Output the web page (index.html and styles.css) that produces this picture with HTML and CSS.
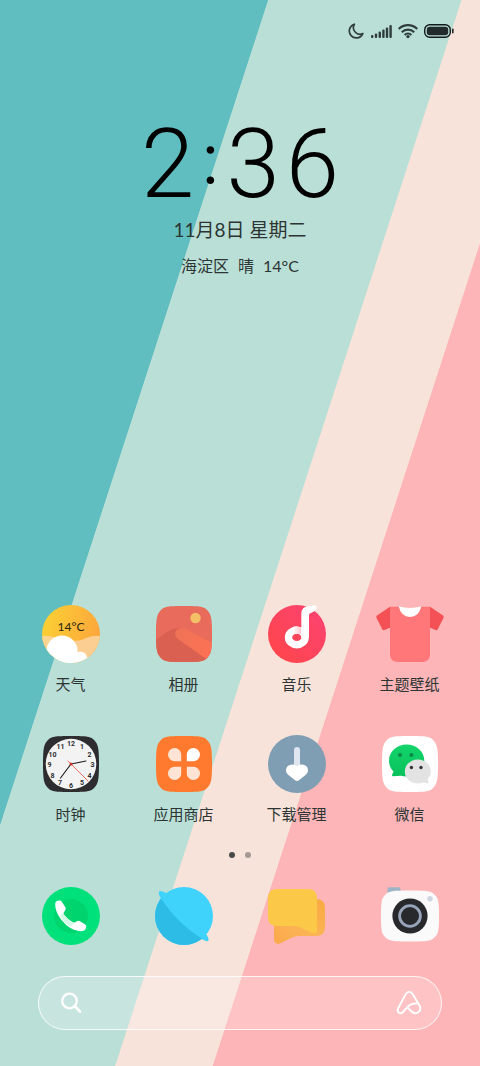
FILE: index.html
```
<!DOCTYPE html>
<html lang="zh-CN">
<head>
    <meta charset="UTF-8">
    <meta name="viewport" content="width=device-width, initial-scale=1.0">
    <title>桌面</title>
    <link rel="stylesheet" href="styles.css">
</head>
<body>
    <header class="status-bar">
        <svg width="16" height="16" viewBox="0 0 16 16" fill="none" stroke="#2f3d3b" stroke-width="1.7" stroke-linejoin="round">
            <path d="M6.4 1.2A7 7 0 1 0 14.8 10.6A6.6 6.6 0 0 1 6.4 1.2Z"/>
        </svg>
        <svg width="22" height="16" viewBox="0 0 22 16" fill="#2f3d3b">
            <rect x="1" y="12" width="2.4" height="3" rx="1"/>
            <rect x="4.8" y="10.5" width="2.4" height="4.5" rx="1"/>
            <rect x="8.6" y="8.5" width="2.4" height="6.5" rx="1"/>
            <rect x="12.2" y="6.5" width="2.4" height="8.5" rx="1"/>
            <rect x="15.8" y="4.5" width="2.4" height="10.5" rx="1"/>
            <rect x="19.4" y="2" width="2.4" height="13" rx="1"/>
        </svg>
        <svg width="20" height="16" viewBox="0 0 20 16" fill="none" stroke="#2f3d3b" stroke-width="2.2">
            <path d="M0.7 6A13 13 0 0 1 19.3 6"/>
            <path d="M3.8 9.2A8.7 8.7 0 0 1 16.2 9.2"/>
            <path d="M6.6 12A4.8 4.8 0 0 1 13.4 12" stroke-width="2"/>
            <circle cx="10" cy="13.6" r="1.7" fill="#2f3d3b" stroke="none"/>
        </svg>
        <svg width="30" height="16" viewBox="0 0 30 16">
            <rect x="0.7" y="1.7" width="25.6" height="12.6" rx="5" fill="none" stroke="#121a19" stroke-width="1.4"/>
            <rect x="2.8" y="3.8" width="21.4" height="8.4" rx="3" fill="#202b2a"/>
            <rect x="28" y="5.5" width="1.6" height="5" rx="0.8" fill="#202b2a"/>
        </svg>
    </header>

    <section class="clock">
        <h1 class="time"><span>2</span><span class="colon">:</span><span>3</span><span>6</span></h1>
        <p class="date">11月8日 星期二</p>
        <p class="weather"><span>海淀区</span><span>晴</span><span>14°C</span></p>
    </section>

    <main class="home">
        <div class="apps">
            <button type="button" class="app">
                <svg class="icon" viewBox="0 0 72 60">
                    <defs>
                        <linearGradient id="sky" x1="0" y1="0.3" x2="1" y2="0.5">
                            <stop offset="0" stop-color="#fbd034"/>
                            <stop offset="1" stop-color="#fca63c"/>
                        </linearGradient>
                        <clipPath id="round"><circle cx="36" cy="30" r="29"/></clipPath>
                    </defs>
                    <circle cx="36" cy="30" r="29" fill="url(#sky)"/>
                    <g clip-path="url(#round)">
                        <path d="M6 32Q14 31 21 34L18 50L6 50Z" fill="#fdd593"/>
                        <path d="M38 37Q46 37 51 34Q58 31 66 32V60H36Z" fill="#fdce91"/>
                        <circle cx="27" cy="47" r="15.5" fill="#fff"/>
                        <path d="M27 47L42 48Q50 46 52.5 54L60 60H20Z" fill="#fff"/>
                    </g>
                    <text class="icon-temp" x="36" y="27" text-anchor="middle">14°C</text>
                </svg>
                <span>天气</span>
            </button>

            <button type="button" class="app">
                <svg class="icon" viewBox="0 0 72 60">
                    <defs>
                        <linearGradient id="dune" x1="0" y1="0" x2="1" y2="1">
                            <stop offset="0" stop-color="#ee7355"/>
                            <stop offset="1" stop-color="#ff7155"/>
                        </linearGradient>
                        <clipPath id="photoClip"><path id="tile" d="M36 2C52 2 56 2.5 59.5 6.5S64 14 64 30S63 49.5 59.5 53.5S52 58 36 58S16 57.5 12.5 53.5S8 46 8 30S9 10.5 12.5 6.5S20 2 36 2Z"/></clipPath>
                    </defs>
                    <g clip-path="url(#photoClip)">
                        <rect x="8" y="2" width="56" height="56" fill="#e96b5b"/>
                        <path d="M8 36C18 29 24 22 34 25L64 58H8Z" fill="#da6151"/>
                        <path d="M39 25.5L64 39V58Q60 56 57 54L30 35C23 29 30 21 39 25.5Z" fill="url(#dune)"/>
                        <circle cx="47.5" cy="14" r="5.2" fill="#f4c065"/>
                    </g>
                </svg>
                <span>相册</span>
            </button>

            <button type="button" class="app">
                <svg class="icon" viewBox="0 0 72 60">
                    <defs>
                        <linearGradient id="disc" x1="1" y1="0" x2="0" y2="1">
                            <stop offset="0" stop-color="#fb4274"/>
                            <stop offset="1" stop-color="#ff4647"/>
                        </linearGradient>
                        <linearGradient id="noteShade" x1="0" y1="0" x2="1" y2="0">
                            <stop offset="0" stop-color="#fff"/>
                            <stop offset="1" stop-color="#ffc2cb"/>
                        </linearGradient>
                    </defs>
                    <circle cx="36" cy="30" r="29" fill="url(#disc)"/>
                    <ellipse cx="35.8" cy="33.4" rx="8.3" ry="7.3" fill="none" stroke="#fff" stroke-width="7.4"/>
                    <path d="M32 22.8Q37 21.5 40.4 24V30Q37 29 33 30Z" fill="url(#noteShade)"/>
                    <path d="M40.3 34V10Q40.3 2.6 48 2.3Q51 2 53 1.2Q55.5 1 55.6 4Q55.3 7 51 8.4Q48 9 48 11.5V34Z" fill="#fff"/>
                </svg>
                <span>音乐</span>
            </button>

            <button type="button" class="app">
                <svg class="icon" viewBox="0 0 72 60">
                    <path d="M16 2.7L3 11.5Q1.8 12.5 2.5 14L8.4 25.5Q9 26.5 10.5 26L17 23.3V3Z" fill="#f35155"/>
                    <path d="M56 2.7L69 11.5Q70.2 12.5 69.5 14L63.6 25.5Q63 26.5 61.5 26L55 23.3V3Z" fill="#f35155"/>
                    <path d="M16 3.5Q16 2.7 18 2.7H25Q27 10 36 10T47 2.7H54Q56 2.7 56 3.5V50Q56 58 48 58H24Q16 58 16 50Z" fill="#ff7779"/>
                    <path d="M24.8 2.6Q36 5.5 47.2 2.6Q45 13 36 13T24.8 2.6Z" fill="#fff"/>
                </svg>
                <span>主题壁纸</span>
            </button>

            <button type="button" class="app">
                <svg class="icon" viewBox="0 0 72 60">
                    <use href="#tile" fill="#2d2d2f"/>
                    <circle cx="36" cy="30" r="25.3" fill="#f3f3f3"/>
                    <g class="dial" text-anchor="middle">
                        <text x="36" y="11.5">12</text>
                        <text x="47" y="14.5">1</text>
                        <text x="54.5" y="22.5">2</text>
                        <text x="57.5" y="32.5">3</text>
                        <text x="54.5" y="43.5">4</text>
                        <text x="47" y="51">5</text>
                        <text x="36" y="54">6</text>
                        <text x="25" y="51">7</text>
                        <text x="17.5" y="43.5">8</text>
                        <text x="14.5" y="32.5">9</text>
                        <text x="17.5" y="22.5">10</text>
                        <text x="25.5" y="14.5">11</text>
                    </g>
                    <g stroke-linecap="round">
                        <path d="M36 30L51 27" stroke="#222" stroke-width="1.2"/>
                        <path d="M36 30L25.5 44" stroke="#222" stroke-width="1.2"/>
                        <path d="M33 27L53 47" stroke="#ee5a4f" stroke-width="0.9"/>
                    </g>
                    <circle cx="36" cy="30" r="1.5" fill="#c8322c"/>
                </svg>
                <span>时钟</span>
            </button>

            <button type="button" class="app">
                <svg class="icon" viewBox="0 0 72 60">
                    <use href="#tile" fill="#ff7a2e"/>
                    <path d="M33.2 27.2H26.6A6.6 6.6 0 1 1 33.2 20.6Z" fill="#ffe4d5"/>
                    <path d="M38.8 27.2V20.6A6.6 6.6 0 1 1 45.4 27.2Z" fill="#fff"/>
                    <path d="M33.2 32.8V39.4A6.6 6.6 0 1 1 26.6 32.8Z" fill="#ffe4d5"/>
                    <path d="M38.8 32.8H45.4A6.6 6.6 0 1 1 38.8 39.4Z" fill="#ffe4d5"/>
                </svg>
                <span>应用商店</span>
            </button>

            <button type="button" class="app">
                <svg class="icon" viewBox="0 0 72 60">
                    <circle cx="36" cy="30" r="29" fill="#7f9db3"/>
                    <rect x="33" y="13" width="6" height="24" rx="3" fill="#dfe6ef"/>
                    <path d="M36 32.5C39 29.5 44 30 46 33C47.8 36 47 39 44.5 41L38 46.3Q36 47.5 34 46.3L27.5 41C25 39 24.2 36 26 33C28 30 33 29.5 36 32.5Z" fill="#fff"/>
                </svg>
                <span>下载管理</span>
            </button>

            <button type="button" class="app">
                <svg class="icon" viewBox="0 0 72 60">
                    <defs>
                        <linearGradient id="chat" x1="0" y1="0" x2="0" y2="1">
                            <stop offset="0" stop-color="#14d46b"/>
                            <stop offset="1" stop-color="#08c25c"/>
                        </linearGradient>
                    </defs>
                    <use href="#tile" fill="#fff"/>
                    <path d="M32.7 10.5C42.5 10.5 50.3 17.8 50.3 26.5S42.5 42.6 32.7 42.6Q29.5 42.6 27 41.8L19 42.3Q17.6 42 18.2 40.5L19.5 37.6C16.5 34.5 15 30.7 15 26.5C15 17.8 22.8 10.5 32.7 10.5Z" fill="url(#chat)"/>
                    <circle cx="26" cy="21" r="2.1" fill="#0a8a48"/>
                    <circle cx="37.4" cy="21" r="2.1" fill="#0a8a48"/>
                    <path d="M43.8 25.5C51 25.5 56.8 30.8 56.8 37.5Q56.8 42 53.5 45L54.5 48.5Q54.5 49.7 53.3 49.3L49 48.5Q46.5 49.5 43.8 49.5C36.6 49.5 30.8 44.2 30.8 37.5S36.6 25.5 43.8 25.5Z" fill="#e3e3e3"/>
                    <circle cx="37.4" cy="33.5" r="1.7" fill="#333"/>
                    <circle cx="47" cy="33.5" r="1.7" fill="#333"/>
                </svg>
                <span>微信</span>
            </button>
        </div>

        <div class="pages">
            <span class="page active"></span>
            <span class="page"></span>
        </div>

        <nav class="dock">
            <button type="button" class="app" aria-label="电话">
                <svg class="icon" viewBox="0 0 72 60">
                    <circle cx="36" cy="30" r="29" fill="#00e17b"/>
                    <circle cx="36" cy="30" r="17" fill="#00d46f"/>
                    <path d="M21 15.5Q25.5 13.5 27 16L30.5 21.5Q31.3 23 30 24.5L28.3 27.5Q32 33.5 39 36.8L41.5 35.5Q43 34.5 44.5 35L50 38.3Q52 39.5 51 42Q50 45.5 45 45.3Q35 44.5 26.5 34Q20 25.5 20.2 18.5Q20.3 16 21 15.5Z" fill="#fff"/>
                    <path d="M28.3 27.5Q32 33.5 39 36.8L35.8 40.8Q28.5 36.5 25 29.8Z" fill="#d4f8e7"/>
                </svg>
            </button>
            <button type="button" class="app" aria-label="浏览器">
                <svg class="icon" viewBox="0 0 72 60">
                    <circle cx="36" cy="30" r="29" fill="#3fd2fb"/>
                    <path d="M18 7Q12 3.5 10.9 5.8Q10.3 9 14 14Q30 37 48 49.5Q58 56.5 60.4 54.8Q61.5 52.5 58 48Z" fill="#3fd2fb"/>
                    <path d="M11 9C21 26 36 42 56 54L40 62H0V9Z" fill="#2dbce6" clip-path="url(#round)"/>
                </svg>
            </button>
            <button type="button" class="app" aria-label="短信">
                <svg class="icon" viewBox="0 0 72 60">
                    <defs>
                        <linearGradient id="msgBack" x1="0" y1="1" x2="1" y2="0">
                            <stop offset="0" stop-color="#fba84c"/>
                            <stop offset="0.5" stop-color="#fbb555"/>
                            <stop offset="1" stop-color="#f9a840"/>
                        </linearGradient>
                    </defs>
                    <path d="M13 20Q13 13 20 13H55Q64 13 64 22V41Q64 50 55 50H38Q34 50 31 51.5L19 57.5Q13 59 13 53Z" fill="url(#msgBack)"/>
                    <path d="M16 3H47Q56 3 56 12V44Q56 48 51 46.8L38 41Q35.5 40 32 40H16Q7 40 7 31V12Q7 3 16 3Z" fill="#fcc848"/>
                </svg>
            </button>
            <button type="button" class="app" aria-label="相机">
                <svg class="icon" viewBox="0 0 72 60">
                    <rect x="13.5" y="1.2" width="13" height="8" rx="2" fill="#9db4c6"/>
                    <path d="M36 4.5C53 4.5 57 5 60.5 8.5S65 14 65 30S64 48 60.5 51.5S53 55.5 36 55.5S15 55 11.5 51.5S7 46 7 30S8 12 11.5 8.5S19 4.5 36 4.5Z" fill="#fafafa"/>
                    <circle cx="36" cy="30" r="17.6" fill="#28292d"/>
                    <circle cx="36" cy="30" r="10.4" fill="none" stroke="#97a4b9" stroke-width="2.8"/>
                    <circle cx="56" cy="12.8" r="2.7" fill="#cdd6e1"/>
                </svg>
            </button>
        </nav>

        <form class="search">
            <button type="submit" class="search-btn" aria-label="搜索">
                <svg width="26" height="26" viewBox="0 0 26 26" fill="none" stroke="#fff" stroke-linecap="round">
                    <circle cx="11.5" cy="11" r="7.3" stroke-width="2.3"/>
                    <path d="M17 16.5L22 21.5" stroke-width="2.6"/>
                </svg>
            </button>
            <input type="text" class="search-input" aria-label="搜索">
            <button type="button" class="search-btn" aria-label="语音助手">
                <svg width="26" height="26" viewBox="0 0 26 26" fill="none" stroke="#fff" stroke-width="1.9" stroke-linecap="round" stroke-linejoin="round">
                    <path d="M12 18Q17 23.5 19.5 23.2C23.5 23 25.5 19 23.5 15.5L16.3 3.6Q13.2 0.2 10 3.6L2 18.5C0.5 22 4 24.5 6.8 22.2C11 18 12.5 13 22 13.3"/>
                </svg>
            </button>
        </form>
    </main>
</body>
</html>
```
FILE: styles.css
```
* {
    box-sizing: border-box;
}

body {
    margin: 0;
    min-height: 100vh;
    display: flex;
    flex-direction: column;
    font-family: Lato, "Noto Sans CJK SC", sans-serif;
    color: #2c3534;
    background: linear-gradient(108deg, #60bec1 32.4%, #badfd6 32.5%, #badfd6 55.8%, #f8e3da 55.9%, #f8e3da 67.6%, #fdb5b7 67.7%);
}

h1, p {
    margin: 0;
    font-weight: normal;
}

button {
    padding: 0;
    border: none;
    background: none;
    color: inherit;
    font-family: inherit;
    cursor: pointer;
}

svg {
    display: block;
}

.status-bar {
    display: flex;
    justify-content: flex-end;
    gap: 6px;
    padding: 23px 26px 0 0;
}

.clock {
    text-align: center;
    padding-top: 77px;
}

.time {
    display: flex;
    justify-content: center;
    align-items: center;
    gap: 6px;
    font-family: Roboto, sans-serif;
    font-weight: 300;
    font-size: 96px;
    line-height: 96px;
    color: #000;
}

.colon {
    font-family: Inter, sans-serif;
    font-size: 72px;
    line-height: 72px;
    padding-bottom: 12px;
}

.date {
    margin-top: 4px;
    font-size: 19px;
    line-height: 28px;
}

.weather {
    display: flex;
    justify-content: center;
    gap: 9px;
    margin-top: 10px;
    font-size: 16px;
    line-height: 24px;
}

.home {
    margin-top: auto;
    padding-bottom: 36px;
}

.apps, .dock {
    display: grid;
    grid-template-columns: repeat(4, 1fr);
    row-gap: 40px;
    padding: 0 14px;
}

.app {
    display: flex;
    flex-direction: column;
    align-items: center;
    gap: 10px;
    font-size: 15px;
    line-height: 20px;
}

.icon {
    width: 72px;
    height: 60px;
    overflow: visible;
}

.icon-temp {
    font-size: 12px;
    fill: #2a2410;
}

.dial {
    font-family: Roboto, sans-serif;
    font-weight: bold;
    font-size: 7px;
    fill: #2d2d2f;
}

.pages {
    display: flex;
    justify-content: center;
    gap: 10px;
    margin: 28px 0;
}

.page {
    width: 6px;
    height: 6px;
    border-radius: 50%;
    background: #a39a93;
}

.page.active {
    background: #4a4a4a;
}

.search {
    display: flex;
    align-items: center;
    height: 54px;
    margin: 30px 38px 0;
    padding: 0 19px;
    border: 1px solid rgba(255, 255, 255, 0.8);
    border-radius: 27px;
    background: rgba(255, 255, 255, 0.2);
}

.search-input {
    flex: 1;
    min-width: 0;
    border: none;
    outline: none;
    background: transparent;
    font-size: 16px;
}
```
